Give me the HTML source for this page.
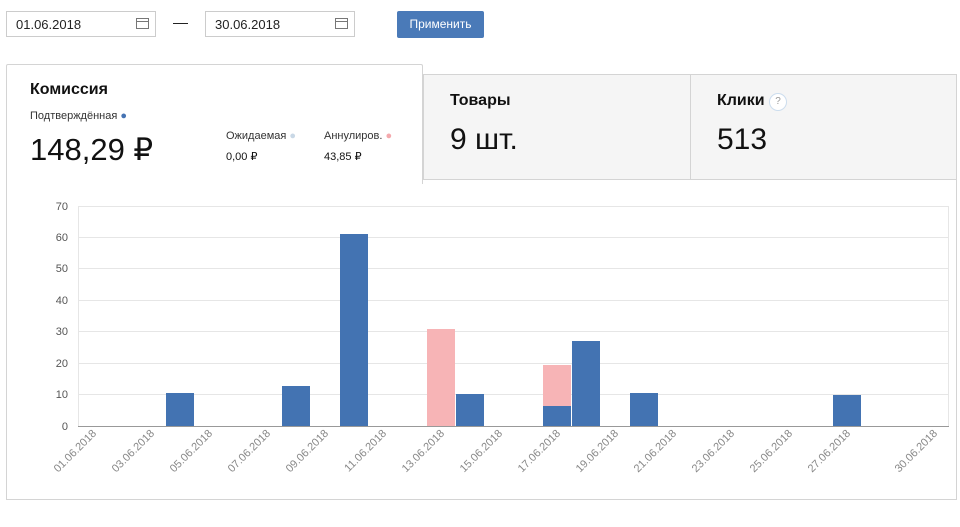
<!DOCTYPE html>
<html><head><meta charset="utf-8"><style>
body{margin:0;width:960px;height:527px;background:#fff;font-family:"Liberation Sans",sans-serif;position:relative;overflow:hidden;color:#111}
.abs{position:absolute}
.inp{position:absolute;top:11px;height:26px;width:150px;border:1px solid #ccc;box-sizing:border-box;font-size:13px;line-height:25px;padding-left:9px;color:#222}
.cal{position:absolute;right:6px;top:6px;width:13px;height:11px;border:1px solid #777;box-sizing:border-box}
.cal:before{content:"";position:absolute;left:0;right:0;top:2px;border-top:1px solid #777}
.btn{position:absolute;left:397px;top:11px;width:87px;height:27px;background:#4a7ab8;border-radius:2px;color:#fff;font-size:12px;line-height:27px;text-align:center}
.card{position:absolute;top:74px;height:106px;background:#f5f5f5;border:1px solid #d4d4d4;box-sizing:border-box;z-index:1}
.card .t{position:absolute;left:26px;top:17px;font-weight:bold;font-size:16px}
.card .v{position:absolute;left:26px;top:48px;font-size:30px}
</style></head><body>
<div class="inp" style="left:6px">01.06.2018<div class="cal"></div></div>
<div class="abs" style="left:173px;top:23px;width:15px;border-top:1px solid #222"></div>
<div class="inp" style="left:205px">30.06.2018<div class="cal"></div></div>
<div class="btn">Применить</div>
<div class="abs" style="left:6px;top:179px;width:951px;height:321px;border:1px solid #d4d4d4;border-top:none;box-sizing:border-box;background:#fff"></div>
<div class="card" style="left:423px;width:268px"><div class="t">Товары</div><div class="v">9 шт.</div></div>
<div class="card" style="left:690px;width:267px"><div class="t">Клики <span style="display:inline-block;width:16px;height:16px;border:1px solid #cde;border-radius:50%;font-size:10px;font-weight:normal;color:#999;text-align:center;line-height:16px;vertical-align:1px;background:#fff">?</span></div><div class="v">513</div></div>
<div class="abs" style="left:6px;top:64px;width:417px;height:120px;border:1px solid #d4d4d4;border-bottom:none;box-sizing:border-box;border-radius:2px 2px 0 0;background:#fff;z-index:2"></div>
<div class="abs" style="z-index:3;left:30px;top:81px;font-weight:bold;font-size:16px">Комиссия</div>
<div class="abs" style="z-index:3;left:30px;top:110px;font-size:11px;color:#333">Подтверждённая <span style="color:#4573b3">●</span></div>
<div class="abs" style="z-index:3;left:30px;top:132px;font-size:31px">148,29 ₽</div>
<div class="abs" style="z-index:3;left:226px;top:130px;font-size:11px;color:#333">Ожидаемая <span style="color:#c9d8e6">●</span></div>
<div class="abs" style="z-index:3;left:226px;top:150px;font-size:11px;color:#111">0,00 ₽</div>
<div class="abs" style="z-index:3;left:324px;top:130px;font-size:11px;color:#333">Аннулиров. <span style="color:#f4a9ad">●</span></div>
<div class="abs" style="z-index:3;left:324px;top:150px;font-size:11px;color:#111">43,85 ₽</div>
<svg class="abs" style="left:0;top:0;z-index:4" width="960" height="527">
<g stroke="#e6e6e6" stroke-width="1">
<line x1="78" y1="206.5" x2="949" y2="206.5"/><line x1="78" y1="237.5" x2="949" y2="237.5"/><line x1="78" y1="268.5" x2="949" y2="268.5"/><line x1="78" y1="300.5" x2="949" y2="300.5"/><line x1="78" y1="331.5" x2="949" y2="331.5"/><line x1="78" y1="363.5" x2="949" y2="363.5"/><line x1="78" y1="394.5" x2="949" y2="394.5"/>
<line x1="78.5" y1="206" x2="78.5" y2="426"/><line x1="948.5" y1="206" x2="948.5" y2="426"/></g>
<line x1="78" y1="426.5" x2="949" y2="426.5" stroke="#999"/>
<g font-size="11" fill="#555" text-anchor="end">
<text x="68" y="210">70</text><text x="68" y="241">60</text><text x="68" y="272">50</text><text x="68" y="304">40</text><text x="68" y="335">30</text><text x="68" y="367">20</text><text x="68" y="398">10</text><text x="68" y="430">0</text></g>
<g fill="#4373b2">
<rect x="166" y="393" width="28" height="33"/><rect x="282" y="386" width="28" height="40"/><rect x="340" y="234" width="28" height="192"/><rect x="456" y="394" width="28" height="32"/><rect x="543" y="406" width="28" height="20"/><rect x="572" y="341" width="28" height="85"/><rect x="630" y="393" width="28" height="33"/><rect x="833" y="395" width="28" height="31"/></g>
<g fill="#f7b4b6"><rect x="427" y="329" width="28" height="97"/><rect x="543" y="365" width="28" height="41"/></g>
<g font-size="11" fill="#888" text-anchor="end">
<text transform="translate(97,434) rotate(-45)">01.06.2018</text>
<text transform="translate(155,434) rotate(-45)">03.06.2018</text>
<text transform="translate(213,434) rotate(-45)">05.06.2018</text>
<text transform="translate(271,434) rotate(-45)">07.06.2018</text>
<text transform="translate(329,434) rotate(-45)">09.06.2018</text>
<text transform="translate(387,434) rotate(-45)">11.06.2018</text>
<text transform="translate(445,434) rotate(-45)">13.06.2018</text>
<text transform="translate(503,434) rotate(-45)">15.06.2018</text>
<text transform="translate(561,434) rotate(-45)">17.06.2018</text>
<text transform="translate(619,434) rotate(-45)">19.06.2018</text>
<text transform="translate(677,434) rotate(-45)">21.06.2018</text>
<text transform="translate(735,434) rotate(-45)">23.06.2018</text>
<text transform="translate(793,434) rotate(-45)">25.06.2018</text>
<text transform="translate(851,434) rotate(-45)">27.06.2018</text>
<text transform="translate(938,434) rotate(-45)">30.06.2018</text>
</g>
</svg>
</body></html>
